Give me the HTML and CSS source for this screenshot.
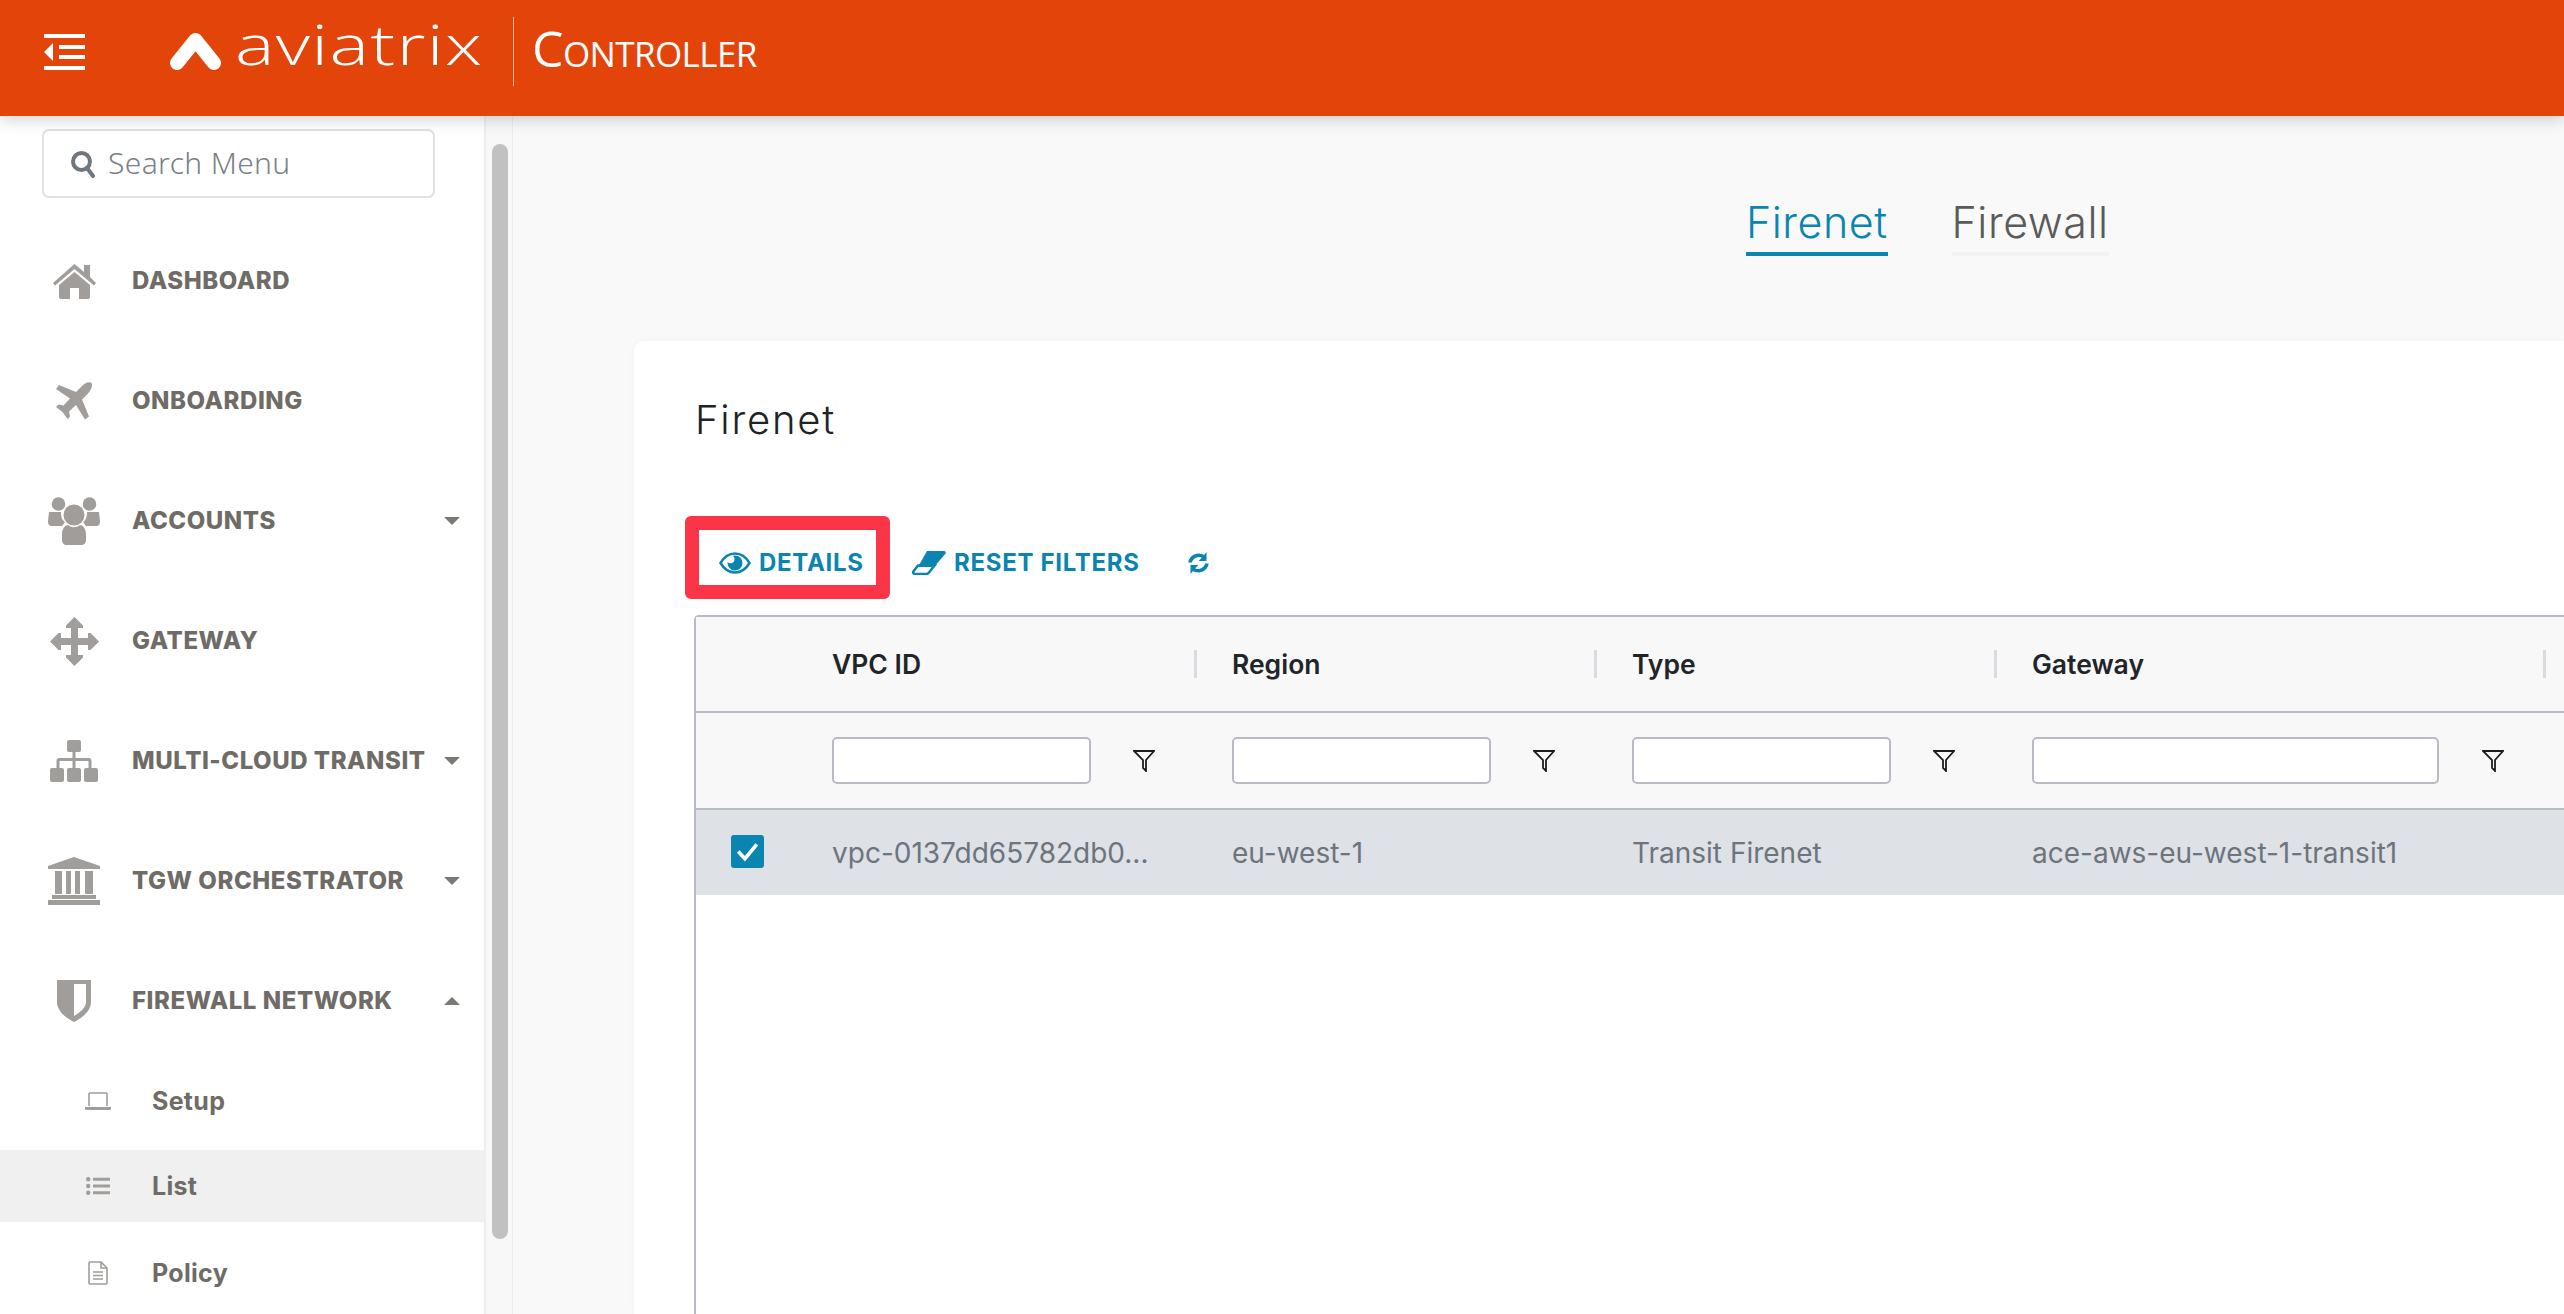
FILE: index.html
```html
<!DOCTYPE html>
<html lang="en">
<head>
<meta charset="utf-8">
<title>Aviatrix Controller</title>
<link rel="stylesheet" href="styles.css">
</head>
<body>
<header class="topbar">
  <svg class="menu-icon" viewBox="0 0 41 36"><path d="M0 0h41v4H0zM15 11h26v4H15zM15 21h26v4H15zM0 32h41v4H0zM0 18l9-9v18z"/></svg>
  <div class="logo">
    <svg class="logo-mark" viewBox="0 0 51 37"><path d="M7 30L25.500 7 44 30"/></svg>
    <span class="logo-word">aviatrix</span>
    <span class="logo-divider"></span>
    <span class="logo-product">Controller</span>
  </div>
</header>
<div class="layout">
  <aside class="sidebar">
    <div class="search">
      <svg class="search-icon" viewBox="0 0 26 28"><circle cx="11.500" cy="11.500" r="8.500"/><path d="M17 18l6 8"/></svg>
      <span class="search-label">Search Menu</span>
    </div>
    <nav class="nav">
      <div class="nav-row">
        <span class="nav-icon"><svg class="i-home" viewBox="0 0 43 35"><path d="M21.500 0L31 8V1h6v12l6 6-2 2.500L21.500 5 2 21.500 0 19zM6 21L21.500 8 37 21v12c0 1-1 2-2 2h-9V24h-9v11H8c-1 0-2-1-2-2z"/></svg></span>
        <span class="nav-label">DASHBOARD</span>
      </div>
      <div class="nav-row">
        <span class="nav-icon"><svg class="i-plane" viewBox="0 0 38 38"><path d="M36.500 1C34-1 30 1 27 4l-6 6L4 3 1 7l14 9.500-6.500 7-5-1L1 25l6.500 5 5 7 2.500-2.500-1-5 7-6.500L30 37.500l4-3-7-17 6-6c3-3 5-8 3.500-10.500z"/></svg></span>
        <span class="nav-label">ONBOARDING</span>
      </div>
      <div class="nav-row">
        <span class="nav-icon"><svg class="i-users" viewBox="0 0 52 48"><circle cx="10.500" cy="7" r="6.800"/><circle cx="41.500" cy="7" r="6.800"/><circle cx="26" cy="18" r="10.500"/><path d="M1 15h12c0 5 1 8 4 10l-3 4H4c-3 0-4-2-4-5zM51 15H39c0 5-1 8-4 10l3 4h10c3 0 4-2 4-5zM14 37c0-5 3-9 6-9 4 3 8 3 12 0 3 0 6 4 6 9v6c0 3-2 5-5 5H19c-3 0-5-2-5-5z"/></svg></span>
        <span class="nav-label">ACCOUNTS</span>
        <span class="caret"></span>
      </div>
      <div class="nav-row">
        <span class="nav-icon"><svg class="i-move" viewBox="0 0 49 49"><path d="M24.500 0L33 8.500V11h-5v10h10v-5h2.500l8.500 8.500-8.500 8.500H38v-5H28v10h5v2.500L24.500 49 16 40.500V38h5V28H11v5H8.500L0 24.500 8.500 16H11v5h10V11h-5V8.500z"/></svg></span>
        <span class="nav-label">GATEWAY</span>
      </div>
      <div class="nav-row">
        <span class="nav-icon"><svg class="i-sitemap" viewBox="0 0 48 42"><rect x="17" width="14" height="12" rx="2"/><rect y="28" width="14" height="14" rx="2"/><rect x="17" y="28" width="14" height="14" rx="2"/><rect x="34" y="28" width="14" height="14" rx="2"/><path d="M22.500 12h3v6h13c2 0 3 1 3 3v7h-3v-7H25.500v7h-3v-7H9.500v7h-3v-7c0-2 1-3 3-3h13z"/></svg></span>
        <span class="nav-label">MULTI-CLOUD TRANSIT</span>
        <span class="caret"></span>
      </div>
      <div class="nav-row">
        <span class="nav-icon"><svg class="i-bank" viewBox="0 0 52 48"><path d="M26 0l26 9v3H0V9zM7 14h7v23H7zM18 14h5v23h-5zM27 14h5v23h-5zM37 14h8v23h-8zM4 38h44v4H4zM0 43h52v5H0z"/></svg></span>
        <span class="nav-label">TGW ORCHESTRATOR</span>
        <span class="caret"></span>
      </div>
      <div class="nav-row">
        <span class="nav-icon"><svg class="i-shield" viewBox="0 0 34 42"><path fill-rule="evenodd" d="M0 0h34v22c0 9-9 16-17 20C9 38 0 31 0 22zM17 4v32c5-3 12-8 12-14V4z"/></svg></span>
        <span class="nav-label">FIREWALL NETWORK</span>
        <span class="caret caret-up"></span>
      </div>
      <div class="sub-nav">
        <div class="sub-row">
          <span class="sub-icon"><svg class="i-laptop" viewBox="0 0 26 18"><path class="line" d="M4 14V2c0-.6.400-1 1-1h16c.6 0 1 .4 1 1v12"/><path d="M0 15h26v1.500c0 .8-.5 1.500-1.500 1.500h-23C.5 18 0 17.300 0 16.500z"/></svg></span>
          <span class="sub-label">Setup</span>
        </div>
        <div class="sub-row sub-row-active">
          <span class="sub-icon"><svg class="i-list" viewBox="0 0 24 18"><circle cx="2.200" cy="2.200" r="2.200"/><circle cx="2.200" cy="9" r="2.200"/><circle cx="2.200" cy="15.800" r="2.200"/><path d="M7 .8h17v3H7zM7 7.500h17v3H7zM7 14.300h17v3H7z"/></svg></span>
          <span class="sub-label">List</span>
        </div>
        <div class="sub-row">
          <span class="sub-icon"><svg class="i-file" viewBox="0 0 20 24"><path class="line" d="M1 2c0-.6.400-1 1-1h11l6 6v15c0 .6-.4 1-1 1H2c-.6 0-1-.4-1-1zM13 1v6h6M5 11h10M5 14.500h10M5 18h10"/></svg></span>
          <span class="sub-label">Policy</span>
        </div>
      </div>
    </nav>
  </aside>
  <div class="scroll-track"><div class="scroll-thumb"></div></div>
  <main class="main">
    <div class="tabs">
      <div class="tab tab-active">Firenet</div>
      <div class="tab">Firewall</div>
    </div>
    <section class="card">
      <h1 class="card-title">Firenet</h1>
      <div class="toolbar">
        <button class="tool tool-marked">
          <svg class="i-eye" viewBox="0 0 32 22"><path class="eye-line" d="M1.500 11C5 5 10 1.500 16 1.500S27 5 30.500 11C27 17 22 20.500 16 20.500S5 17 1.500 11z"/><path d="M16 3.500a7.500 7.500 0 1 1-7.400 6.300c.7 1 1.800 1.500 3 1.500 2.200 0 3.900-1.700 3.900-3.900 0-1.500-.5-2.900-1.500-3.700.6-.1 1.300-.2 2-.2z"/></svg>
          DETAILS
        </button>
        <button class="tool">
          <svg class="i-eraser" viewBox="0 0 34 24"><path d="M15 0h17c1.500 0 2.300 1.500 1.400 2.800L22 16H6z"/><path class="eye-line" d="M6 14.500h16.500L17 21.500c-.8 1-1.500 1.500-2.500 1.500H3c-1.500 0-2.300-1.500-1.500-2.800z"/></svg>
          RESET FILTERS
        </button>
        <button class="tool tool-refresh" aria-label="Refresh">
          <svg class="i-refresh" viewBox="0 0 21 24"><path d="M18.500 1v9h-8l3.300-3.200C11.500 5.200 7.500 6 5.500 8.500 4.700 9.500 4 10.500 3.800 11.500H.3C1 6 5.500 2.500 10.500 2.500c2.400 0 4.700.9 5.500 1.400zM2.500 23v-9h8l-3.300 3.200c2.300 1.600 6.300.8 8.300-1.700.8-1 1.500-2 1.700-3h3.500c-.7 5.500-5.200 9-10.200 9-2.400 0-4.700-.9-5.500-1.400z"/></svg>
        </button>
      </div>
      <div class="grid">
        <div class="grid-row grid-head">
          <div class="cell"></div>
          <div class="cell head-cell">VPC ID<span class="sep"></span></div>
          <div class="cell head-cell">Region<span class="sep"></span></div>
          <div class="cell head-cell">Type<span class="sep"></span></div>
          <div class="cell head-cell head-wide">Gateway<span class="sep"></span></div>
        </div>
        <div class="grid-row grid-filter">
          <div class="cell"></div>
          <div class="cell"><span class="filter-input"></span><svg class="i-filter" viewBox="0 0 22 22"><path d="M1 1h20l-8 9v11l-3-3v-8z"/></svg></div>
          <div class="cell"><span class="filter-input"></span><svg class="i-filter" viewBox="0 0 22 22"><path d="M1 1h20l-8 9v11l-3-3v-8z"/></svg></div>
          <div class="cell"><span class="filter-input"></span><svg class="i-filter" viewBox="0 0 22 22"><path d="M1 1h20l-8 9v11l-3-3v-8z"/></svg></div>
          <div class="cell head-wide"><span class="filter-input filter-wide"></span><svg class="i-filter" viewBox="0 0 22 22"><path d="M1 1h20l-8 9v11l-3-3v-8z"/></svg></div>
        </div>
        <div class="grid-row grid-data">
          <div class="cell cell-check"><span class="check"><svg viewBox="0 0 32 32"><path d="M7 16l6.500 7L25 9"/></svg></span></div>
          <div class="cell">vpc-0137dd65782db0...</div>
          <div class="cell">eu-west-1</div>
          <div class="cell">Transit Firenet</div>
          <div class="cell head-wide">ace-aws-eu-west-1-transit1</div>
        </div>
      </div>
    </section>
  </main>
</div>
</body>
</html>
```
FILE: styles.css
```css
* { box-sizing: border-box; }
html, body { margin: 0; height: 100%; overflow: hidden; }
body { font-family: Inter, "Liberation Sans", sans-serif; background: #fff; height: 1314px; display: flex; flex-direction: column; }

.topbar { height: 116px; flex: none; background: #e34409; display: flex; align-items: flex-start; padding-left: 44px; position: relative; z-index: 2; box-shadow: 0 4px 14px rgba(60,60,60,.22); }
.menu-icon { width: 41px; height: 36px; margin-top: 34px; fill: #fff; flex: none; }
.logo { display: flex; align-items: flex-start; margin-left: 85px; color: #fff; }
.logo-mark { width: 51px; height: 37px; margin-top: 33px; fill: none; stroke: #fff; stroke-width: 14; stroke-linecap: round; stroke-linejoin: round; flex: none; }
.logo-word { font-family: "Open Sans", sans-serif; font-weight: 300; font-size: 56px; line-height: 60px; margin: 13px 0 0 14px; letter-spacing: 1px; width: 246px; transform: scaleX(1.33); transform-origin: left center; }
.logo-divider { width: 1px; height: 69px; margin: 17px 0 0 32px; background: #f6b99f; }
.logo-product { font-family: "Open Sans", sans-serif; font-variant: small-caps; font-size: 50px; line-height: 60px; margin: 18px 0 0 18px; letter-spacing: -.6px; }

.layout { flex: 1; display: flex; min-height: 0; }
.sidebar { width: 484px; flex: none; background: #fff; padding: 13px 0 0; }
.search { margin-left: 42px; width: 393px; height: 69px; border: 2px solid #dfe1e3; border-radius: 7px; display: flex; align-items: center; padding-left: 26px; background: #fff; }
.search-icon { width: 26px; height: 28px; fill: none; stroke: #6f767d; stroke-width: 4; stroke-linecap: round; }
.search-label { font-family: "Noto Sans", sans-serif; font-weight: 300; font-size: 30px; line-height: 40px; margin-top: -2px; color: #7a8087; margin-left: 12px; letter-spacing: .35px; }

.nav { margin-top: 23px; }
.nav-row { height: 120px; display: flex; align-items: center; padding: 0 24px 0 40px; }
.nav-icon { width: 68px; flex: none; display: flex; justify-content: center; fill: #a09d9a; }
.nav-label { margin: -2px 0 0 24px; font-weight: 800; font-size: 24px; color: #6f6b66; letter-spacing: .55px; white-space: nowrap; }
.caret { margin-left: auto; width: 0; height: 0; border-left: 8px solid transparent; border-right: 8px solid transparent; border-top: 8px solid #7c7873; }
.caret-up { border-top: 0; border-bottom: 8px solid #7c7873; }
.i-home { width: 43px; height: 35px; }
.i-plane { width: 38px; height: 38px; }
.i-users { width: 52px; height: 48px; }
.i-move { width: 49px; height: 49px; }
.i-sitemap { width: 48px; height: 42px; }
.i-bank { width: 52px; height: 48px; }
.i-shield { width: 34px; height: 42px; }

.sub-nav { padding-top: 5px; display: flex; flex-direction: column; gap: 16px; }
.sub-row { height: 70px; display: flex; align-items: center; padding-left: 84px; }
.sub-row-active { background: #f0f0f0; height: 72px; margin-top: -2px; }
.sub-icon { width: 28px; flex: none; display: flex; justify-content: center; fill: #a09d9a; }
.sub-label { margin-left: 40px; font-weight: 700; font-size: 25px; color: #6f6b66; letter-spacing: .3px; }
.line { fill: none; stroke: #a09d9a; stroke-width: 1.600; }
.i-laptop { width: 26px; height: 18px; }
.i-list { width: 24px; height: 18px; }
.i-file { width: 20px; height: 24px; }

.scroll-track { width: 29px; flex: none; background: #f8f8f8; border-left: 2px solid #eee; border-right: 1px solid #ececec; padding: 28px 4px 0 6px; }
.scroll-thumb { width: 16px; height: 1095px; border-radius: 8px; background: #c1c1c1; }

.main { flex: 1; min-width: 0; background: #f9f9f9; overflow: hidden; padding-left: 121px; }
.tabs { height: 225px; display: flex; gap: 64px; padding: 83px 0 0 1112px; }
.tab { height: 57px; font-weight: 300; font-size: 43px; line-height: 46px; letter-spacing: .5px; color: #5b5b5b; border-bottom: 4px solid #f3f3f3; }
.tab-active { color: #0a84b0; border-bottom-color: #0a84b0; }

.card { background: #fff; height: 973px; border-top-left-radius: 10px; padding: 0 0 0 60px; box-shadow: 0 0 6px rgba(0,0,0,.03); }
.card-title { margin: 0; padding: 54px 0 0 1px; font-weight: 300; font-size: 40px; line-height: 50px; letter-spacing: 1.8px; color: #202326; }
.toolbar { display: flex; align-items: center; margin: 71px 0 0 -9px; height: 83px; }
.tool { display: flex; align-items: center; background: none; border: 0; padding: 10px 0 0; font-family: inherit; font-weight: 700; font-size: 24px; letter-spacing: .7px; color: #0a84b0; fill: #0a84b0; margin-left: 22px; white-space: nowrap; }
.tool-marked { margin-left: 0; width: 205px; height: 83px; border: 14px solid #fc3447; border-radius: 6px; padding: 10px 0 0 20px; gap: 8px; }
.tool:nth-child(2) { gap: 8px; }
.tool-refresh { margin-left: 48px; }
.eye-line { fill: none; stroke: #0a84b0; stroke-width: 2.500; }
.i-eye { width: 32px; height: 22px; }
.i-eraser { width: 34px; height: 24px; }
.i-refresh { width: 21px; height: 24px; }

.grid { margin-top: 16px; margin-right: -40px; border: 2px solid #b8bbc6; border-right: 0; border-bottom: 0; border-top-left-radius: 5px; height: 700px; width: 1900px; }
.grid-row { display: grid; grid-template-columns: 136px 400px 400px 400px 1fr; align-items: center; }
.grid-head { height: 96px; background: #f8f8f8; border-bottom: 2px solid #b8bbc6; font-weight: 600; font-size: 26.500px; color: #212529; }
.grid-filter { height: 97px; background: #f8f8f8; border-bottom: 2px solid #b8bbc6; }
.grid-data { height: 85px; background: #dee1e6; font-size: 28px; color: #6c757d; }
.cell { display: flex; align-items: center; position: relative; white-space: nowrap; }
.cell-check { padding-left: 35px; }
.sep { position: absolute; top: -14px; left: 362px; width: 3px; height: 28px; background: #d9dbe0; }
.head-cell { height: 0; }
.head-wide .sep { left: 511px; }
.filter-input { width: 259px; height: 47px; background: #fff; border: 2px solid #b8bbc6; border-radius: 5px; flex: none; }
.filter-wide { width: 407px; }
.i-filter { width: 22px; height: 22px; margin-left: 42px; fill: none; stroke: #1c1c1c; stroke-width: 1.800; flex: none; }
.filter-wide + .i-filter { margin-left: 43px; }
.check { width: 33px; height: 33px; margin-top: -3px; border-radius: 3px; background: #0a84b0; display: block; }
.check svg { display: block; fill: none; stroke: #fff; stroke-width: 3.500; }
```
